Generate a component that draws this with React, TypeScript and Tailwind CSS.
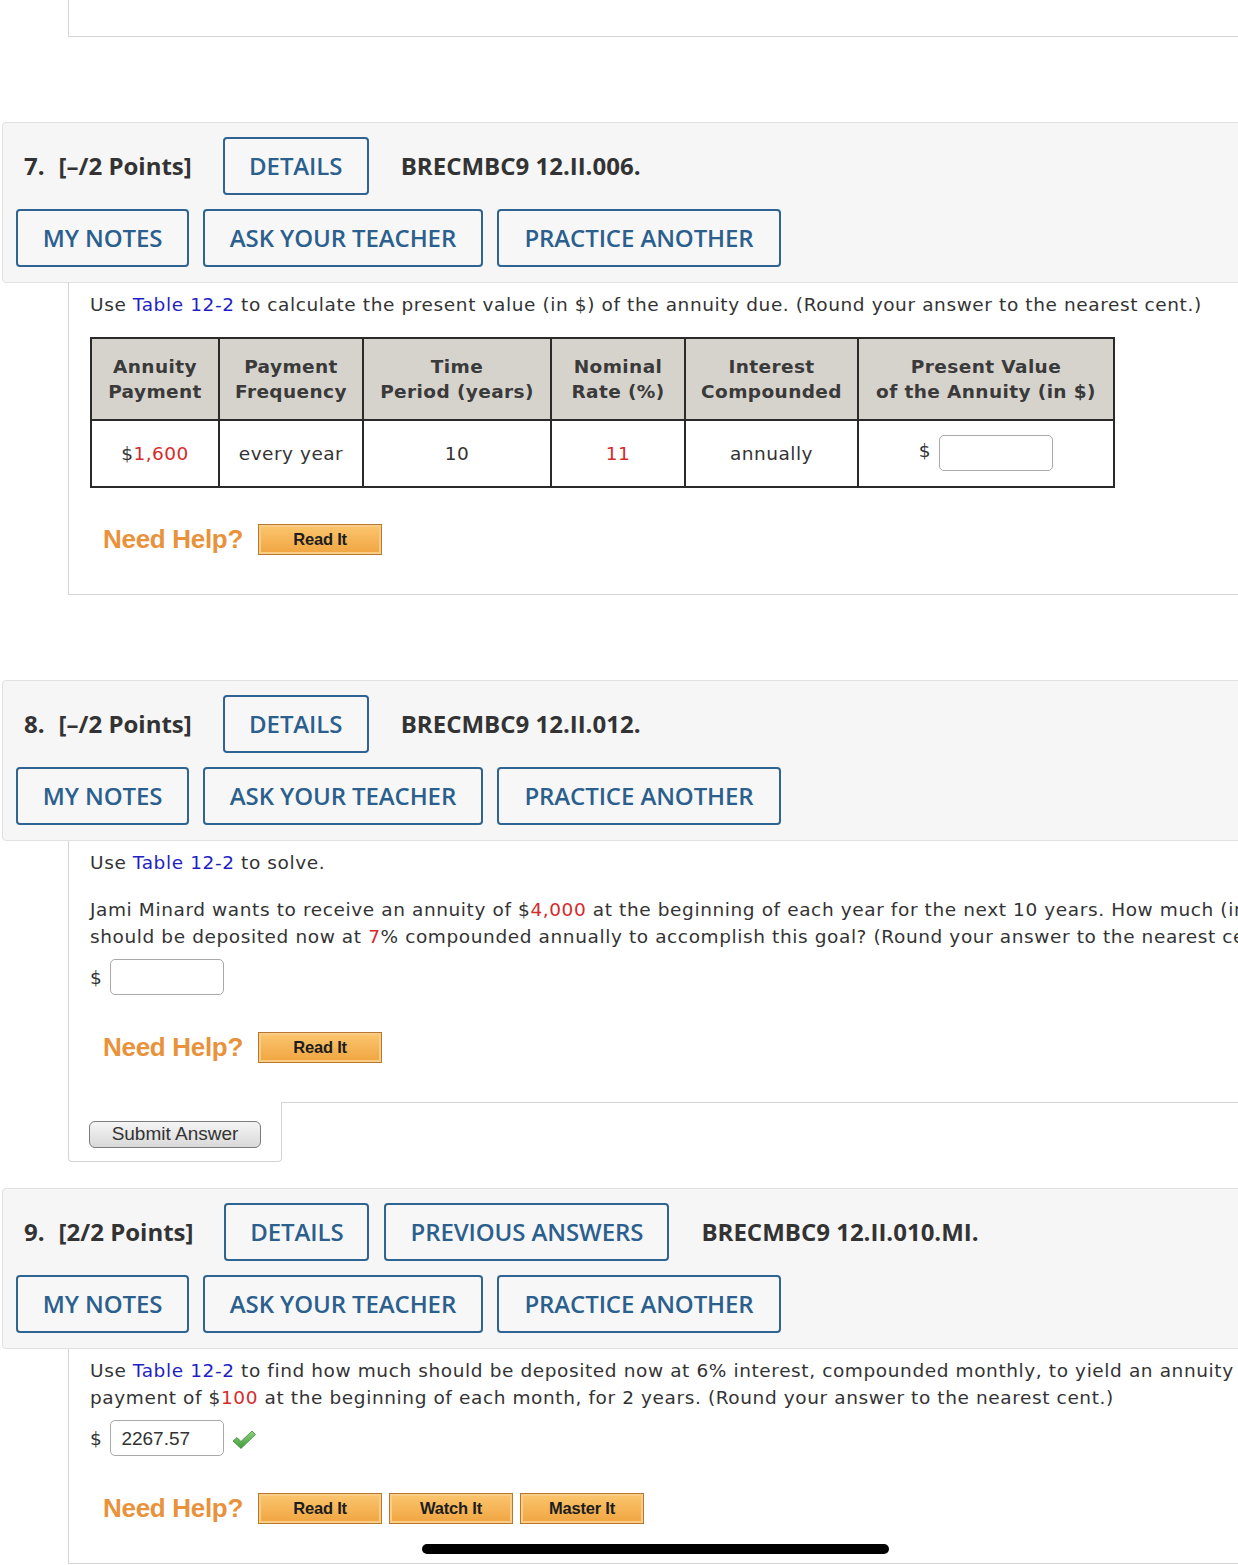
import React from 'react';

const OPEN = { fontFamily: '"Open Sans", "Noto Sans", sans-serif' };
const VERD = { fontFamily: '"DejaVu Sans", Verdana, sans-serif' };
const ARIAL = { fontFamily: '"Liberation Sans", Arial, sans-serif' };

const Link: React.FC<{ children: React.ReactNode }> = ({ children }) => (
  <span className="text-[#1f1fc4]">{children}</span>
);

const Red: React.FC<{ children: React.ReactNode }> = ({ children }) => (
  <span className="text-[#d42b2b]">{children}</span>
);

const OutlineBtn: React.FC<{ label: string; w: string }> = ({ label, w }) => (
  <div
    className={`${w} h-[58px] shrink-0 flex items-center justify-center border-2 border-[#2f6391] rounded-[4px] bg-[#f7f7f7] text-[#2b5f8e] text-[24px] font-semibold tracking-[-0.1px]`}
    style={OPEN}
  >
    {label}
  </div>
);

interface HeaderProps {
  num: number;
  points: string;
  code: string;
  prev?: boolean;
}

const QuestionHeader: React.FC<HeaderProps> = ({ num, points, code, prev }) => (
  <div className="ml-[2px] w-[1400px] h-[161px] border border-[#e1e1e1] rounded-l-[4px] bg-[#f6f6f6] pt-[14px]">
    <div className="flex items-center pl-[21px] h-[58px]" style={OPEN}>
      <span className="text-[24px] font-bold text-[#333] mr-[14px]">{num}.</span>
      <span className="text-[24px] font-bold text-[#333] mr-[31px]">[{points} Points]</span>
      <OutlineBtn label="DETAILS" w={prev ? 'w-[145px]' : 'w-[146px]'} />
      {prev && (
        <div className="ml-[15px]">
          <OutlineBtn label="PREVIOUS ANSWERS" w="w-[285px]" />
        </div>
      )}
      <span className="ml-[32px] text-[24px] font-bold text-[#333]">{code}</span>
    </div>
    <div className="flex gap-[14px] pl-[13px] mt-[14px]">
      <OutlineBtn label="MY NOTES" w="w-[173px]" />
      <OutlineBtn label="ASK YOUR TEACHER" w="w-[280px]" />
      <OutlineBtn label="PRACTICE ANOTHER" w="w-[284px]" />
    </div>
  </div>
);

const HelpBtn: React.FC<{ label: string }> = ({ label }) => (
  <div
    className="w-[124px] h-[31px] flex items-center justify-center border border-[#b8762e] bg-gradient-to-b from-[#fbc66e] to-[#f0a43f] shadow-[inset_0_0_0_2px_#f9cd86] text-[16.5px] font-bold text-[#1d1d1d] tracking-[-0.2px]"
    style={ARIAL}
  >
    {label}
  </div>
);

const NeedHelp: React.FC<{ buttons: string[] }> = ({ buttons }) => (
  <div className="flex items-center pl-[13px] h-[31px]">
    <span className="text-[26px] font-bold text-[#e9923c] mr-[15px] tracking-[-0.3px]" style={ARIAL}>
      Need Help?
    </span>
    <div className="flex gap-[7px]">
      {buttons.map((b) => (
        <HelpBtn key={b} label={b} />
      ))}
    </div>
  </div>
);

const AnswerBox: React.FC<{ value?: string }> = ({ value }) => (
  <div
    className="w-[114px] h-[36px] border border-[#a9a9a9] rounded-[5px] bg-white flex items-center pl-[10px] text-[19px] tracking-normal text-[#333]"
    style={ARIAL}
  >
    {value}
  </div>
);

const Check = () => (
  <svg width="26" height="22" viewBox="0 0 26 22" className="ml-[7px] mt-[4px]">
    <defs>
      <linearGradient id="chk" x1="0" y1="0" x2="0" y2="1">
        <stop offset="0" stopColor="#8fd27e" />
        <stop offset="1" stopColor="#3f9a3a" />
      </linearGradient>
    </defs>
    <path d="M2 12 L6 8.5 L10 12.5 L21 2 L24.5 5.5 L10 19.5 Z" fill="url(#chk)" stroke="#3c8a36" strokeWidth="0.8" />
  </svg>
);

const cols = [
  { w: 'w-[128px]', h: ['Annuity', 'Payment'] },
  { w: 'w-[144px]', h: ['Payment', 'Frequency'] },
  { w: 'w-[188px]', h: ['Time', 'Period (years)'] },
  { w: 'w-[134px]', h: ['Nominal', 'Rate (%)'] },
  { w: 'w-[173px]', h: ['Interest', 'Compounded'] },
  { w: 'w-[256px]', h: ['Present Value', 'of the Annuity (in $)'] },
];

const AnnuityTable = () => (
  <table
    className="border-collapse border-2 border-[#2a2a2a] text-[18.5px] tracking-[0.5px] text-[#333] table-fixed"
    style={VERD}
  >
    <thead>
      <tr className="bg-[#d6d3cd] h-[82px]">
        {cols.map((c) => (
          <th
            key={c.h.join()}
            className={`${c.w} border-2 border-[#2a2a2a] font-bold text-center leading-[25px] text-[#3a3a3a] tracking-[0.4px]`}
          >
            {c.h[0]}
            <br />
            {c.h[1]}
          </th>
        ))}
      </tr>
    </thead>
    <tbody>
      <tr className="h-[67px] bg-white text-center">
        <td className="border-2 border-[#2a2a2a]">
          $<Red>1,600</Red>
        </td>
        <td className="border-2 border-[#2a2a2a]">every year</td>
        <td className="border-2 border-[#2a2a2a]">10</td>
        <td className="border-2 border-[#2a2a2a]">
          <Red>11</Red>
        </td>
        <td className="border-2 border-[#2a2a2a]">annually</td>
        <td className="border-2 border-[#2a2a2a]">
          <div className="flex items-center justify-center -mt-[2px]">
            <span className="mr-[8px] -mt-[4px]">$</span>
            <AnswerBox />
          </div>
        </td>
      </tr>
    </tbody>
  </table>
);

const bodyText = 'text-[18.5px] leading-[27px] tracking-[0.6px] text-[#333] whitespace-nowrap';

export default function App() {
  return (
    <div className="relative w-[1238px] h-[1565px] overflow-hidden bg-white">
      <div className="w-[1400px]">
        {/* end of previous question */}
        <div className="ml-[68px] h-[37px] border-l border-b border-[#d4d4d4]" />

        {/* Question 7 */}
        <div className="mt-[85px]">
          <QuestionHeader num={7} points="–/2" code="BRECMBC9 12.II.006." />
          <div className="ml-[68px] border-l border-b border-[#d4d4d4] pl-[21px] pt-[8px] pb-[39px]">
            <p className={bodyText} style={VERD}>
              Use <Link>Table 12-2</Link> to calculate the present value (in $) of the annuity due. (Round your answer to the nearest cent.)
            </p>
            <div className="mt-[19px]">
              <AnnuityTable />
            </div>
            <div className="mt-[36px]">
              <NeedHelp buttons={['Read It']} />
            </div>
          </div>
        </div>

        {/* Question 8 */}
        <div className="mt-[85px]">
          <QuestionHeader num={8} points="–/2" code="BRECMBC9 12.II.012." />
          <div className="ml-[68px]">
            <div className="border-l border-[#d4d4d4] pl-[21px] pt-[8px] pb-[39px]">
              <div className={bodyText} style={VERD}>
                <p>
                  Use <Link>Table 12-2</Link> to solve.
                </p>
                <p className="mt-[20px]">
                  Jami Minard wants to receive an annuity of $<Red>4,000</Red> at the beginning of each year for the next 10 years. How much (in $)
                  <br />
                  should be deposited now at <Red>7</Red>% compounded annually to accomplish this goal? (Round your answer to the nearest cent.)
                </p>
                <div className="flex items-center mt-[9px]">
                  <span className="mr-[8px]">$</span>
                  <AnswerBox />
                </div>
              </div>
              <div className="mt-[37px]">
                <NeedHelp buttons={['Read It']} />
              </div>
            </div>
            <div className="flex">
              <div className="w-[214px] h-[60px] border-l border-r border-b border-[#d4d4d4] rounded-b-[4px] pl-[20px] pt-[19px]">
                <div
                  className="w-[172px] h-[27px] flex items-center justify-center border border-[#7a7a7a] rounded-[6px] bg-gradient-to-b from-[#f5f5f5] to-[#d9d9d9] text-[19px] text-[#333]"
                  style={ARIAL}
                >
                  Submit Answer
                </div>
              </div>
              <div className="flex-1 border-t border-[#d4d4d4]" />
            </div>
          </div>
        </div>

        {/* Question 9 */}
        <div className="mt-[26px]">
          <QuestionHeader num={9} points="2/2" code="BRECMBC9 12.II.010.MI." prev />
          <div className="ml-[68px] border-l border-b border-[#d4d4d4] pl-[21px] pt-[8px] pb-[39px]">
            <div className={bodyText} style={VERD}>
              <p>
                Use <Link>Table 12-2</Link> to find how much should be deposited now at 6% interest, compounded monthly, to yield an annuity
                <br />
                payment of $<Red>100</Red> at the beginning of each month, for 2 years. (Round your answer to the nearest cent.)
              </p>
              <div className="flex items-center mt-[9px]">
                <span className="mr-[8px]">$</span>
                <AnswerBox value="2267.57" />
                <Check />
              </div>
            </div>
            <div className="mt-[37px]">
              <NeedHelp buttons={['Read It', 'Watch It', 'Master It']} />
            </div>
          </div>
        </div>
      </div>

      {/* device home indicator */}
      <div className="absolute left-[422px] top-[1544px] w-[467px] h-[10px] rounded-full bg-black" />
    </div>
  );
}
